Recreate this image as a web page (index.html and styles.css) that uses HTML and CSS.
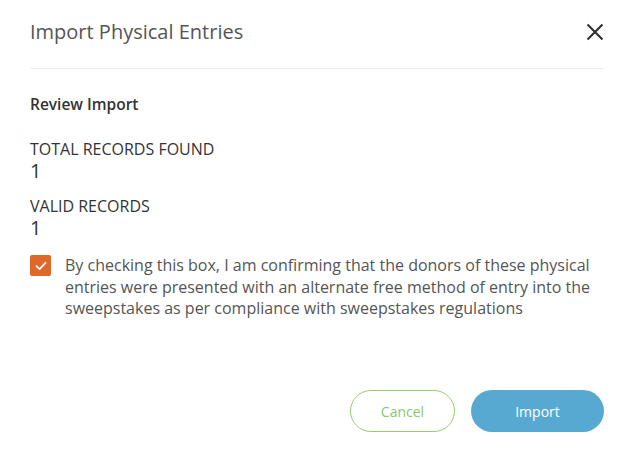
FILE: index.html
```html
<!DOCTYPE html>
<html>
<head>
<meta charset="utf-8">
<link rel="stylesheet" href="styles.css">
</head>
<body>
<div class="dialog">
  <div class="header">
    <h1 class="title">Import Physical Entries</h1>
    <button class="close" aria-label="Close">
      <svg width="18" height="18" viewBox="0 0 18 18"><path d="M1.5 1.5 L16.5 16.5 M16.5 1.5 L1.5 16.5" stroke="#2b2b2b" stroke-width="2" fill="none"/></svg>
    </button>
  </div>
  <div class="body">
    <h2 class="section">Review Import</h2>
    <div class="stat">
      <div class="label">TOTAL RECORDS FOUND</div>
      <div class="value">1</div>
    </div>
    <div class="stat">
      <div class="label">VALID RECORDS</div>
      <div class="value">1</div>
    </div>
    <label class="confirm">
      <span class="box">
        <svg width="12" height="10" viewBox="0 0 12 10"><path d="M1.5 5.2 L4.6 8.2 L10.5 1.8" stroke="#fff" stroke-width="1.8" fill="none" stroke-linecap="round" stroke-linejoin="round"/></svg>
      </span>
      <span class="confirm-text">By checking this box, I am confirming that the donors of these physical entries were presented with an alternate free method of entry into the sweepstakes as per compliance with sweepstakes regulations</span>
    </label>
  </div>
  <div class="footer">
    <button class="btn btn-cancel">Cancel</button>
    <button class="btn btn-import">Import</button>
  </div>
</div>
</body>
</html>
```
FILE: styles.css
```css
html, body {
  margin: 0;
  padding: 0;
  background: #fff;
}
body {
  font-family: "Open Sans", "Liberation Sans", sans-serif;
  color: #555;
}
.dialog {
  width: 629px;
  height: 449px;
  box-sizing: border-box;
  padding: 0 25px 0 30px;
  display: flex;
  flex-direction: column;
}
.header {
  display: flex;
  align-items: center;
  justify-content: space-between;
  padding: 17px 0 21px;
  border-bottom: 1px solid #eeeeee;
}
.title {
  margin: 0;
  font-size: 20px;
  font-weight: 400;
  line-height: 30px;
  color: #555;
}
.close {
  border: 0;
  background: none;
  padding: 0;
  width: 18px;
  height: 18px;
  display: flex;
  cursor: pointer;
}
.body {
  padding-top: 24px;
}
.section {
  margin: 0 0 24px;
  font-size: 15.5px;
  font-weight: 600;
  line-height: 22px;
  color: #333;
}
.stat {
  margin-bottom: 13px;
}
.label {
  font-size: 16px;
  line-height: 20px;
  color: #333;
}
.value {
  font-size: 20px;
  line-height: 24px;
  color: #333;
}
.confirm {
  display: flex;
  gap: 14px;
  align-items: flex-start;
}
.box {
  flex: none;
  width: 21px;
  height: 21px;
  margin-top: 2px;
  border-radius: 2px;
  background: #e0672a;
  display: flex;
  align-items: center;
  justify-content: center;
}
.confirm-text {
  padding-top: 2px;
  font-size: 16px;
  line-height: 21.5px;
  color: #555;
}
.footer {
  margin-top: auto;
  display: flex;
  justify-content: flex-end;
  gap: 16px;
  padding-bottom: 17px;
}
.btn {
  font-family: inherit;
  font-size: 14px;
  height: 42px;
  border-radius: 21px;
  cursor: pointer;
}
.btn-cancel {
  width: 105px;
  background: #fff;
  border: 1px solid #9acd70;
  color: #8cc56b;
}
.btn-import {
  width: 133px;
  background: #58a9d1;
  border: 0;
  color: #fff;
}
```
